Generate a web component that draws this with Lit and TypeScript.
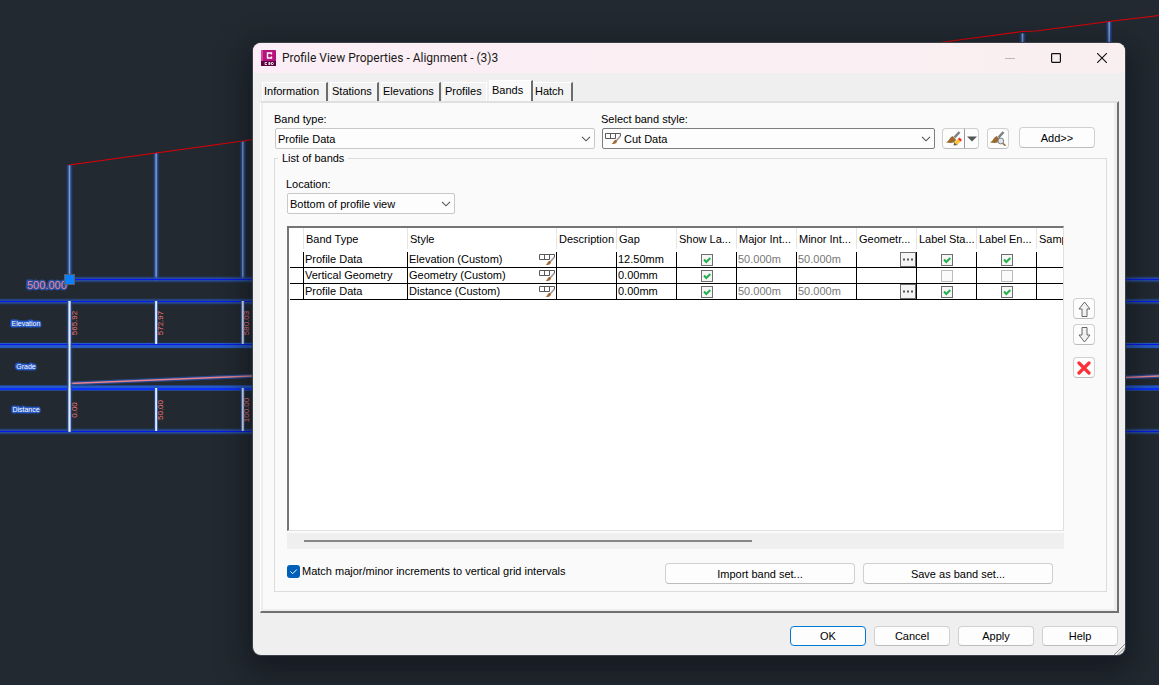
import { LitElement, html, svg, css, nothing } from "lit";
import { customElement, property } from "lit/decorators.js";

const stations = Array.from({ length: 13 }, (_, i) => 69.5 + i * 86.64);
const groundLine = "69,165 156,153 243,141 936,43 1022,31.5 1036,31 1109,21.5 1159,15.5";

const bandIcon = html`<svg class="band-icon" width="17" height="13" viewBox="0 0 17 13" aria-hidden="true">
  <path d="M.5 1.5h15M.5 6.5h10M.5 1.5v5M5.500 1.500v5M10.500 1.500v5M15.500 1.500v2.500" fill="none" stroke="#5a5a5a" />
  <path d="M15.500 4 11.500 8.500" stroke="#9a9a9a" stroke-width="1.600" fill="none" />
  <path d="M12 8.500c.6 2-2 4-5.500 3.500 1.800-.6 1.800-3.200 3.800-4.200z" fill="#a0692d" />
</svg>`;

const brushShapes = svg`
  <path d="M13.500 1 8.500 6.500" stroke="#7c8187" stroke-width="2.600" fill="none" />
  <path d="M6.500 5 10 8.500C9.500 12 5 12.500 0 11.500 3.200 10 3.500 6.500 6.500 5z" fill="#9a6a2e" />`;

@customElement("site-drawing")
export class SiteDrawing extends LitElement {
  static styles = css`
    :host { display: block; height: 100%; overflow: hidden; }
    svg { display: block; width: 1159px; height: 685px; }
    .glow { stroke: #2850a0; stroke-width: 4; opacity: 0.85; }
    .halo { stroke: #234689; stroke-width: 6; opacity: 0.45; }
    .core { stroke: #0818e8; stroke-width: 1; }
    .wide-glow { stroke: #2560d8; stroke-width: 5; opacity: 0.85; }
    .wide-core { stroke: #0a30fa; stroke-width: 2; }
    .post { stroke: #7f9ac8; stroke-width: 1.500; }
    .tick { stroke: #dfe8fa; stroke-width: 2; }
    .ground { fill: none; stroke: #e00008; stroke-width: 1.200; }
    .grade { stroke: #e8838e; stroke-width: 1.300; }
    .grip { fill: #0a80fa; stroke: #5a6068; }
    .name { font: 7px "Liberation Sans", sans-serif; fill: #fff; text-anchor: middle; stroke: #2458c4; stroke-width: 3; stroke-linejoin: round; paint-order: stroke; }
    .datum { font: 11px "Liberation Sans", sans-serif; fill: #e88a9c; stroke: #264f9f; stroke-width: 3; stroke-linejoin: round; paint-order: stroke; }
    .value { font: 8px "Liberation Sans", sans-serif; fill: #f0767c; text-anchor: middle; }
  `;
  render() {
    const bar = (y: number, from = 0) => svg`
      <path class="halo" d="M${from} ${y}H1159" /><path class="glow" d="M${from} ${y}H1159" /><path class="core" d="M${from} ${y}H1159" />`;
    const wide = (y: number, core: number) => svg`
      <path class="halo" d="M0 ${y}H1159" /><path class="wide-glow" d="M0 ${y}H1159" /><path class=${core ? "wide-core" : "core"} d="M0 ${core || y - 1}H1159" />`;
    const value = (x: number, y: number, t: string) => svg`
      <text class="value" transform="translate(${x} ${y}) rotate(-90)">${t}</text>`;
    return html`<svg viewBox="0 0 1159 685">
      ${stations.map((x) => {
        const top = 165 - ((x - 69) * 143.5) / 1040;
        return svg`<path class="halo" d="M${x} ${top}V281" /><path class="glow" d="M${x} ${top}V281" /><path class="post" d="M${x} ${top}V281" />`;
      })}
      <polyline class="ground" points=${groundLine} />
      ${bar(279.5, 69)} ${bar(301.5)} ${wide(345.5, 0)} ${wide(388, 389)} ${bar(431.5)}
      <path class="glow" d="M69 383.500 252 376M1125 377.500 1159 376" />
      <path class="grade" d="M69 383.500 252 376M1125 377.500 1159 376" />
      ${stations.slice(0, 3).map((x) => svg`
        <path class="glow" d="M${x} 301V344M${x} 388V431" /><path class="tick" d="M${x} 301V344M${x} 388V431" />`)}
      <path class="halo" d="M69.500 301V432" /><path class="glow" d="M69.500 344V388" /><path class="tick" d="M69.500 301V432" />
      <text class="datum" x="27" y="289">500.000</text>
      <rect class="grip" x="64.500" y="274.500" width="10" height="10" />
      <text class="name" x="26" y="326">Elevation</text>
      <text class="name" x="26" y="369">Grade</text>
      <text class="name" x="26" y="412">Distance</text>
      ${value(77, 323, "565.92")} ${value(163, 323, "572.97")} ${value(249, 323, "580.03")}
      ${value(77, 410, "0.00")} ${value(163, 410, "50.00")} ${value(249, 410, "100.00")}
    </svg>`;
  }
}

@customElement("combo-box")
export class ComboBox extends LitElement {
  @property() label = "";
  @property() value = "";
  @property({ type: Boolean }) icon = false;
  static styles = css`
    :host { display: block; min-width: 0; }
    .field { display: flex; flex-direction: column; gap: 1px; }
    label { line-height: 16px; }
    .box { display: grid; align-items: center; margin-left: 1px; }
    select { grid-area: 1 / 1; appearance: none; box-sizing: border-box; width: 100%; height: 21px; margin: 0; padding: 0 24px 0 2px; border: 1px solid #c8c8c8; border-radius: 2px; background: #fdfdfd; color: #000; font: inherit; }
    .with-icon select { padding-left: 21px; border-color: #7e7e7e; }
    .chevron { grid-area: 1 / 1; justify-self: end; margin-right: 4px; pointer-events: none; }
    .band-icon { grid-area: 1 / 1; margin-left: 3px; pointer-events: none; }
  `;
  render() {
    return html`<div class="field">
      <label for="list">${this.label}</label>
      <div class="box ${this.icon ? "with-icon" : ""}">
        <select id="list"><option>${this.value}</option></select>
        ${this.icon ? bandIcon : nothing}
        <svg class="chevron" width="10" height="6" viewBox="0 0 10 6" aria-hidden="true"><path d="M1 .8 5 4.800 9 .8" fill="none" stroke="#555" stroke-width="1.100" /></svg>
      </div>
    </div>`;
  }
}

interface Band {
  type: string;
  style: string;
  gap: string;
  interval: string;
  geometry: boolean;
}

const bands: Band[] = [
  { type: "Profile Data", style: "Elevation (Custom)", gap: "12.50mm", interval: "50.000m", geometry: true },
  { type: "Vertical Geometry", style: "Geometry (Custom)", gap: "0.00mm", interval: "", geometry: false },
  { type: "Profile Data", style: "Distance (Custom)", gap: "0.00mm", interval: "50.000m", geometry: true },
];
const headings = ["", "Band Type", "Style", "Description", "Gap", "Show La...", "Major Int...", "Minor Int...", "Geometr...", "Label Sta...", "Label En...", "Sample"];

@customElement("band-table")
export class BandTable extends LitElement {
  static styles = css`
    :host { display: block; min-width: 0; }
    .frame { height: 302px; overflow: hidden; padding-left: 1px; background: #fff; border: 1px solid #e0e0e0; border-top: 2px solid #757575; border-left: 2px solid #757575; }
    table { table-layout: fixed; width: 807px; border-collapse: separate; border-spacing: 0; }
    .c-mark { width: 14px; } .c-type { width: 104px; } .c-style { width: 149px; } .c-std { width: 60px; }
    th { box-sizing: border-box; height: 24px; padding: 0 0 2px 2px; text-align: left; font-weight: normal; white-space: nowrap; overflow: hidden; background: linear-gradient(#e5e5e5, #e5e5e5) right top / 1px 21px no-repeat; }
    td { box-sizing: border-box; height: 16px; padding: 0; border-right: 1px solid #000; border-bottom: 1px solid #000; line-height: 15px; white-space: nowrap; }
    .cell { display: flex; align-items: center; justify-content: space-between; height: 15px; overflow: hidden; padding-left: 1px; }
    .cell.dim { color: #777; }
    .end { justify-content: flex-end; }
    .center { justify-content: center; }
    .more { display: grid; place-items: center; box-sizing: border-box; width: 16px; height: 15px; padding: 0; background: #f4f4f4; border: 1px solid #6e6e6e; }
    input { appearance: none; box-sizing: border-box; width: 12px; height: 12px; margin: 0; border: 1px solid #6e6e6e; background: #f6f6f6; }
    input:checked { background: #f6f6f6 url("data:image/svg+xml,%3Csvg xmlns='http://www.w3.org/2000/svg' viewBox='0 0 10 10'%3E%3Cpath d='M2 4.500 4.300 7 8.300 3' fill='none' stroke='%2322b14c' stroke-width='2'/%3E%3C/svg%3E") center / 10px 10px no-repeat; }
    input:disabled { border-color: #bcbcbc; background: #fafafa; }
    .bar { height: 16px; margin-top: 2px; display: flex; align-items: center; padding-left: 17px; background: #efefef; }
    .thumb { width: 59%; height: 2px; background: #868686; }
  `;
  private tick(label: string, on: boolean) {
    return html`<td><div class="cell center"><input type="checkbox" aria-label=${label} .checked=${on} ?disabled=${!on} /></div></td>`;
  }
  render() {
    return html`<div class="frame"><table>
        <colgroup><col class="c-mark" /><col class="c-type" /><col class="c-style" />${headings.slice(3).map(() => html`<col class="c-std" />`)}</colgroup>
        <thead><tr>${headings.map((h) => html`<th scope="col">${h}</th>`)}</tr></thead>
        <tbody>
          ${bands.map((b) => html`<tr>
            <td></td>
            <td><div class="cell">${b.type}</div></td>
            <td><div class="cell">${b.style}${bandIcon}</div></td>
            <td></td>
            <td><div class="cell">${b.gap}</div></td>
            ${this.tick("Show Labels", true)}
            <td><div class="cell dim">${b.interval}</div></td>
            <td><div class="cell dim">${b.interval}</div></td>
            <td><div class="cell end">${b.geometry ? html`<button class="more" aria-label="Geometry points"><svg width="12" height="3" viewBox="0 0 12 3"><path d="M1 .5h2v2H1zM5 .5h2v2H5zM9 .5h2v2H9z" fill="#555" /></svg></button>` : nothing}</div></td>
            ${this.tick("Label Start Station", b.geometry)}
            ${this.tick("Label End Station", b.geometry)}
            <td></td>
          </tr>`)}
        </tbody>
      </table></div>
      <div class="bar"><div class="thumb"></div></div>`;
  }
}

@customElement("app-root")
export class AppRoot extends LitElement {
  static styles = css`
    :host { display: block; position: relative; height: 100vh; min-height: 685px; overflow: hidden; background: #222930; color: #000; font: 11px/16px "Liberation Sans", Arial, sans-serif; }
    .dialog { position: absolute; top: 43px; left: 253px; right: 34px; border-radius: 8px; background: #efefef; box-shadow: 0 0 0 1px #3c4147, 0 10px 30px 6px rgba(10, 12, 20, 0.55); overflow: hidden; }
    button { box-sizing: border-box; margin: 0; padding: 0; border: 1px solid #d0d0d0; border-bottom-color: #bcbcbc; border-radius: 4px; background: #fdfdfd; color: #000; font: inherit; }
    .title { display: flex; align-items: center; height: 30px; padding-left: 8px; background: linear-gradient(90deg, #fbeef6, #f9eff0); }
    h1 { flex: 1; margin: 0 0 0 6px; font: 12px/16px Roboto, sans-serif; color: #1a1a1a; }
    .caption { display: grid; place-items: center; width: 46px; height: 30px; border: 0; background: none; }
    .tabs { display: flex; align-items: flex-end; height: 21px; padding: 7px 9px 0 9px; }
    .tab { height: 19px; margin-right: 2px; padding: 0 4px 3px 1px; text-align: left; border: 1px solid #fff; border-right: 2px solid #6c6c6c; border-bottom: 0; border-radius: 0; background: #f3f3f3; }
    .information { width: 66px; } .stations { width: 49px; } .elevations { width: 60px; } .profiles { width: 44px; border-right: 1px solid #fff; }
    .hatch { width: 40px; margin-left: -2px; padding-left: 2px; border-left: 0; }
    .bands { width: 44px; height: 21px; padding: 0 0 3px 2px; background: #fafafa; }
    .page { margin: 0 6px 0 7px; padding: 8px 10px 19px 13px; background: #fafafa; border-top: 2px solid #e0e0e0; border-left: 1px solid #fff; border-right: 2px solid #707070; border-bottom: 2px solid #707070; box-shadow: inset 2px 0 #eee, inset -3px -2px #eee; }
    .pickers { display: flex; align-items: flex-end; padding: 0 12px 1px 0; }
    .type { flex: 321 1 0; }
    .style { flex: 334 1 0; margin-left: 6px; }
    .split { display: flex; margin-left: 7px; }
    .tool { display: grid; place-items: center; width: 22px; height: 21px; }
    .split .tool { width: 23px; border-radius: 4px 0 0 4px; border-right-color: #999; }
    .split .arrow { width: 14px; border-left: 0; border-radius: 0 4px 4px 0; border-right-color: #d0d0d0; }
    .preview { margin-left: 8px; }
    .add { width: 76px; height: 21px; margin: 0 0 1px 10px; }
    fieldset { min-width: 0; margin: 0; padding: 10px 11px 7px 12px; border: 1px solid #dcdcdc; }
    legend { padding: 0 4px; margin-left: -9px; line-height: 16px; }
    .location { width: 169px; margin-left: -1px; }
    .list { display: flex; gap: 9px; margin-top: 12px; }
    .list band-table { flex: 1; }
    .side { display: flex; flex-direction: column; gap: 5px; margin-top: 72px; }
    .delete { margin-top: 7px; }
    .options { display: flex; align-items: flex-start; gap: 8px; margin: 14px 42px 0 0; }
    .match { display: flex; align-items: center; gap: 2px; flex: 1; }
    .match input { appearance: none; width: 13px; height: 13px; margin: 0; border-radius: 3px; background: #005fb8 url("data:image/svg+xml,%3Csvg xmlns='http://www.w3.org/2000/svg' viewBox='0 0 13 13'%3E%3Cpath d='M3.500 6.500 5.700 8.700 9.800 4.500' fill='none' stroke='%23fff'/%3E%3C/svg%3E") no-repeat; }
    .wide { width: 190px; height: 21px; }
    footer { display: flex; justify-content: flex-end; gap: 8px; padding: 13px 7px 9px 0; }
    footer button { width: 76px; height: 20px; }
    .default { border-color: #0078d4; }
    .grip { position: absolute; right: 0; bottom: 0; }
  `;
  render() {
    return html`
      <site-drawing></site-drawing>
      <section class="dialog" role="dialog" aria-labelledby="title">
        <header class="title">
          <svg width="15" height="16" viewBox="0 0 15 16" aria-hidden="true">
            <rect width="15" height="16" rx="1" fill="#b5127e" /><path d="M0 0h2v11H0z" fill="#d246a0" /><path d="M0 11h15v5H0z" fill="#5e0640" />
            <path d="M10.500 4.500V3H6.500v5h4V6.500" fill="none" stroke="#fff" stroke-width="1.400" />
            <path d="M6 12.500H4v2h2M7.500 12.500h1.500v2H7.500M7.500 13.500H9M10.500 12.500H12l.5 1-.5 1h-1.500z" fill="none" stroke="#fff" stroke-width=".8" />
          </svg>
          <h1 id="title">Profile View Properties - Alignment - (3)3</h1>
          <button class="caption" aria-label="Minimize" disabled><svg width="10" height="10" viewBox="0 0 10 10"><path d="M0 5.500h10" stroke="#bcb5b9" /></svg></button>
          <button class="caption" aria-label="Maximize"><svg width="10" height="10" viewBox="0 0 10 10"><rect x=".6" y=".6" width="8.800" height="8.800" rx=".8" fill="none" stroke="#111" stroke-width="1.200" /></svg></button>
          <button class="caption" aria-label="Close"><svg width="10" height="10" viewBox="0 0 10 10"><path d="M0 0 10 10M10 0 0 10" stroke="#111" stroke-width="1.100" /></svg></button>
        </header>
        <nav class="tabs" role="tablist">
          ${["Information", "Stations", "Elevations", "Profiles", "Bands", "Hatch"].map(
            (t) => html`<button role="tab" aria-selected=${t === "Bands"} class="tab ${t.toLowerCase()}">${t}</button>`
          )}
        </nav>
        <main class="page">
          <div class="pickers">
            <combo-box class="type" label="Band type:" value="Profile Data"></combo-box>
            <combo-box class="style" label="Select band style:" value="Cut Data" icon></combo-box>
            <div class="split">
              <button class="tool" aria-label="Edit style"><svg width="16" height="15" viewBox="0 0 16 15">${brushShapes}<path d="M7.500 14.500 8.500 11 12 14z" fill="#555" /><path d="M8.200 11.500 12.500 7.500 15 10 11 14z" fill="#fbc233" /><path d="M12 8 13.500 6.500 16 9 14.500 10.500z" fill="#ee2c35" /></svg></button>
              <button class="tool arrow" aria-label="More style actions"><svg width="10" height="6" viewBox="0 0 10 6"><path d="M0 .5h10L5 5.500z" fill="#555" /></svg></button>
            </div>
            <button class="tool preview" aria-label="Preview style"><svg width="16" height="15" viewBox="0 0 16 15">${brushShapes}<path d="M12.500 12 15.500 14.800" stroke="#9a6a2e" stroke-width="1.600" /><circle cx="10.800" cy="10" r="2.900" fill="#e0e4e8" stroke="#7c8187" /></svg></button>
            <button class="add">Add&gt;&gt;</button>
          </div>
          <fieldset>
            <legend>List of bands</legend>
            <combo-box class="location" label="Location:" value="Bottom of profile view"></combo-box>
            <div class="list">
              <band-table></band-table>
              <div class="side">
                <button class="tool" aria-label="Move up"><svg width="13" height="16" viewBox="0 0 13 16"><path d="M6.500 1 12 8H9v7.500H4V8H1z" fill="#f2f2f2" stroke="#666" /></svg></button>
                <button class="tool" aria-label="Move down"><svg width="13" height="16" viewBox="0 0 13 16"><path d="M6.500 15 12 8H9V.5H4V8H1z" fill="#f2f2f2" stroke="#666" /></svg></button>
                <button class="tool delete" aria-label="Remove band"><svg width="14" height="14" viewBox="0 0 14 14"><path d="M2 2 12 12M12 2 2 12" stroke="#fa3238" stroke-width="3.200" stroke-linecap="round" /></svg></button>
              </div>
            </div>
            <div class="options">
              <label class="match"><input type="checkbox" checked />Match major/minor increments to vertical grid intervals</label>
              <button class="wide">Import band set...</button>
              <button class="wide">Save as band set...</button>
            </div>
          </fieldset>
        </main>
        <footer>
          <button class="default">OK</button><button>Cancel</button><button>Apply</button><button>Help</button>
        </footer>
        <svg class="grip" width="12" height="12" viewBox="0 0 12 12" aria-hidden="true"><path d="M1 12 12 1M4.500 12 12 4.500M8 12 12 8" stroke="#8c8c8c" /></svg>
      </section>`;
  }
}
